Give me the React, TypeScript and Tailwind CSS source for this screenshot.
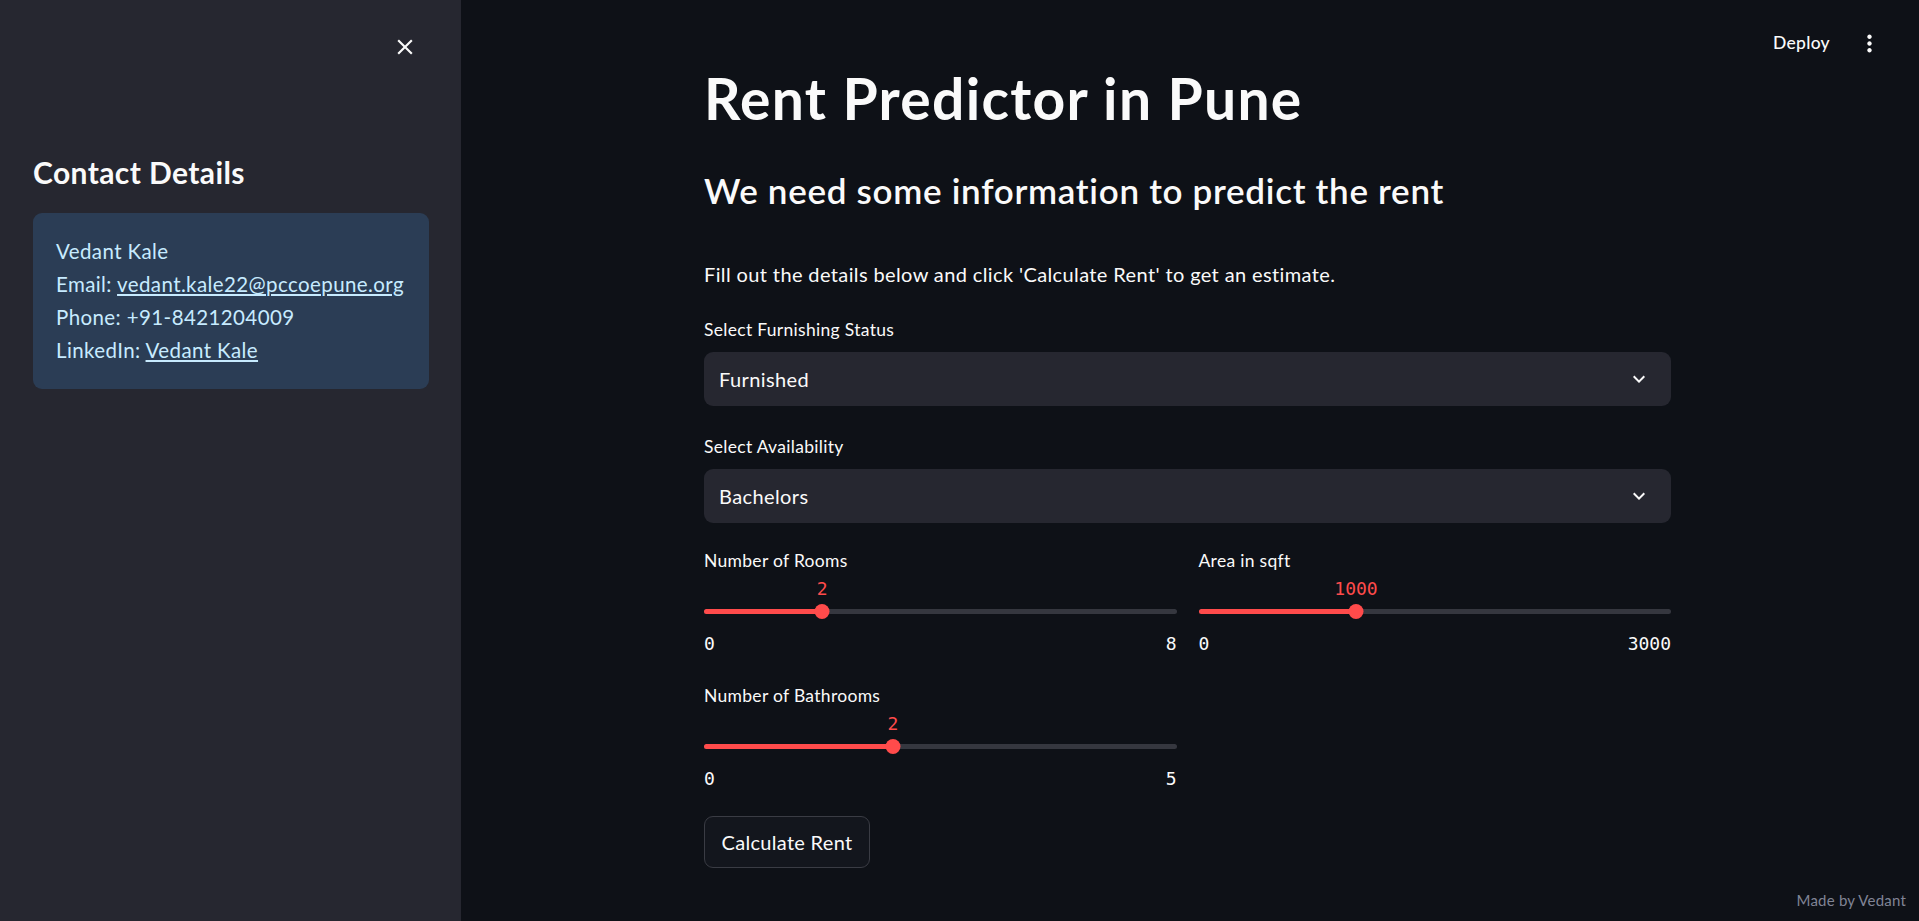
import { useState } from "react";

const sans = "font-['Lato','Noto_Sans',sans-serif]";
const mono = "font-['DejaVu_Sans_Mono','Liberation_Mono',monospace]";

function ExpandMore() {
  return (
    <svg viewBox="0 0 24 24" className="w-[24px] h-[24px] fill-[#fafafa]">
      <path d="M16.59 8.59L12 13.17 7.41 8.59 6 10l6 6 6-6z" />
    </svg>
  );
}

function SelectBox({ label, value }: { label: string; value: string }) {
  return (
    <div className="flex flex-col">
      <div className="h-[36px] text-[17.5px] leading-[28px] tracking-[0.3px] text-[#fafafa]">{label}</div>
      <div className="h-[54px] rounded-[9px] bg-[#262730] flex items-center justify-between pl-[15px] pr-[20px]">
        <span className="text-[20px] tracking-[0.4px] text-[#fafafa]">{value}</span>
        <ExpandMore />
      </div>
    </div>
  );
}

function Slider({ label, value, min, max }: { label: string; value: number; min: number; max: number }) {
  const pct = ((value - min) / (max - min)) * 100;
  return (
    <div className="flex flex-col">
      <div className="h-[28px] text-[17.5px] leading-[28px] tracking-[0.3px] text-[#fafafa]">{label}</div>
      <div className="relative h-[50px]">
        <div
          className={`absolute top-[2px] -translate-x-1/2 text-[18px] leading-[24px] text-[#ff4b4b] ${mono}`}
          style={{ left: `${pct}%` }}
        >
          {value}
        </div>
        <div className="absolute left-0 right-0 top-[34px] h-[5px] rounded-full bg-[#35373f]">
          <div className="h-full rounded-full bg-[#ff4b4b]" style={{ width: `${pct}%` }} />
        </div>
        <div
          className="absolute top-[29px] w-[15px] h-[15px] -translate-x-1/2 rounded-full bg-[#ff4b4b]"
          style={{ left: `${pct}%` }}
        />
      </div>
      <div className={`h-[36px] flex items-center justify-between text-[18px] text-[#fafafa] ${mono}`}>
        <span>{min}</span>
        <span>{max}</span>
      </div>
    </div>
  );
}

export default function App() {
  const [open] = useState(true);

  return (
    <div className={`flex w-full h-[921px] overflow-hidden bg-[#0e1117] text-[#fafafa] ${sans}`}>
      {/* Sidebar */}
      {open && (
        <aside className="w-[461px] shrink-0 h-full bg-[#262730] flex flex-col px-[33px]">
          <div className="flex justify-end pt-[34px]">
            <svg viewBox="0 0 24 24" className="w-[26px] h-[26px] fill-[#fafafa] mr-[10px]">
              <path d="M19 6.41L17.59 5 12 10.59 6.41 5 5 6.41 10.59 12 5 17.59 6.41 19 12 13.41 17.59 19 19 17.59 13.41 12z" />
            </svg>
          </div>
          <h3 className="mt-[92px] text-[30px] leading-[40px] font-bold tracking-[0.4px]">Contact Details</h3>
          <div className="mt-[21px] w-[396px] rounded-[9px] bg-[#2b3d55] px-[23px] py-[22px] text-[20.5px] leading-[33px] tracking-[0.4px] text-[#c7ebff]">
            <div>Vedant Kale</div>
            <div>
              Email: <a className="underline">vedant.kale22@pccoepune.org</a>
            </div>
            <div>Phone: +91-8421204009</div>
            <div>
              LinkedIn: <a className="underline">Vedant Kale</a>
            </div>
          </div>
        </aside>
      )}

      {/* Main */}
      <main className="relative flex-1 h-full">
        <div className="absolute top-[30px] right-[36px] flex items-center gap-[26px]">
          <span className="text-[17.5px] font-medium tracking-[0.3px]">Deploy</span>
          <svg viewBox="0 0 24 24" className="w-[27px] h-[27px] fill-[#fafafa]">
            <path d="M12 8c1.1 0 2-.9 2-2s-.9-2-2-2-2 .9-2 2 .9 2 2 2zm0 2c-1.1 0-2 .9-2 2s.9 2 2 2 2-.9 2-2-.9-2-2-2zm0 6c-1.1 0-2 .9-2 2s.9 2 2 2 2-.9 2-2-.9-2-2-2z" />
          </svg>
        </div>

        <div className="w-[967px] ml-[243px] pt-[65px] flex flex-col">
          <h1 className="text-[57px] leading-[66px] font-bold tracking-[1.3px]">Rent Predictor in Pune</h1>
          <h3 className="mt-[38px] text-[35px] leading-[42px] font-semibold tracking-[0.7px]">
            We need some information to predict the rent
          </h3>
          <p className="mt-[47px] text-[20px] leading-[32px] tracking-[0.38px]">
            Fill out the details below and click 'Calculate Rent' to get an estimate.
          </p>

          <div className="mt-[26px] flex flex-col gap-[27px]">
            <SelectBox label="Select Furnishing Status" value="Furnished" />
            <SelectBox label="Select Availability" value="Bachelors" />
          </div>

          <div className="mt-[24px] grid grid-cols-2 gap-x-[22px] gap-y-[21px]">
            <Slider label="Number of Rooms" value={2} min={0} max={8} />
            <Slider label="Area in sqft" value={1000} min={0} max={3000} />
            <Slider label="Number of Bathrooms" value={2} min={0} max={5} />
          </div>

          <div className="mt-[20px]">
            <button className="h-[52px] w-[166px] rounded-[9px] border border-[#3a3c44] bg-[#13161d] text-[20px] tracking-[0.3px] text-[#fafafa]">
              Calculate Rent
            </button>
          </div>
        </div>

        <div className="absolute right-[13px] bottom-[10px] text-[15px] tracking-[0.2px] text-[#808495]">
          Made by Vedant
        </div>
      </main>
    </div>
  );
}
